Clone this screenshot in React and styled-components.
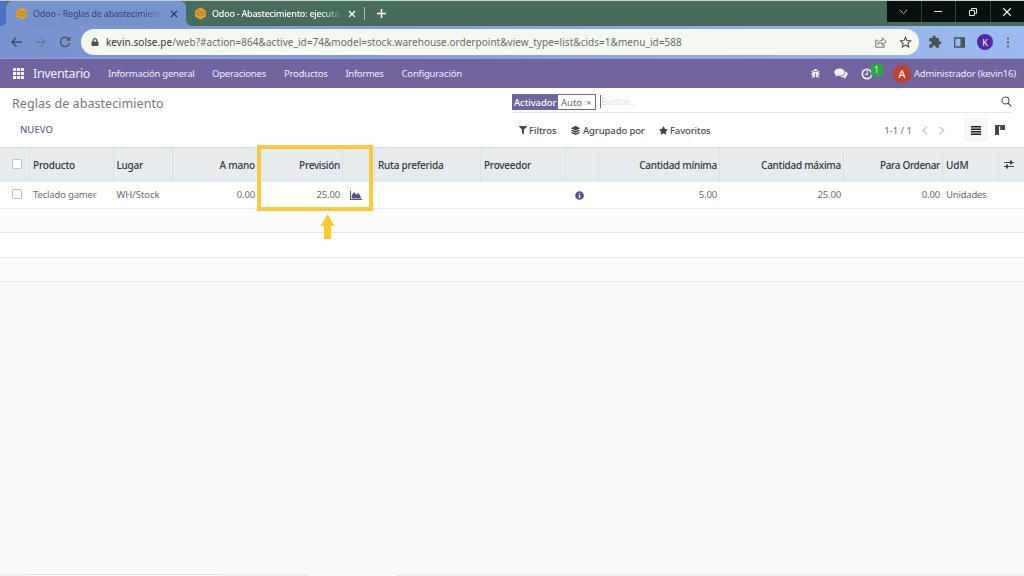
import React, { useState } from 'react';
import styled, { createGlobalStyle, css } from 'styled-components'
import { FaBug, FaFilter, FaLayerGroup, FaStar, FaInfoCircle, FaLock } from 'react-icons/fa'
import { MdExtension } from 'react-icons/md'

const GlobalStyle = createGlobalStyle`
  *{ box-sizing: border-box; }
  body{
    margin: 0;
    height: 576px;
    overflow: hidden;
    background: #f9fafc;
    font-family: "Noto Sans", "Open Sans", sans-serif;
    font-size: 9.5px;
    color: #666b70;
  }
  svg{ display: block; flex: none; }
`

const purple = '#71639e'

/* ---------- browser ---------- */
const Page = styled.div`
  display: flex;
  flex-direction: column;
  width: 1024px;
  height: 576px;
  overflow: hidden;
`
const TabStrip = styled.div`
  display: flex;
  flex: none;
  height: 26px;
  background: #486c5c;
  border-top: 1px solid #bfd3ca;
`
const StripEdge = styled.div`
  width: 6px;
  height: 25px;
  background: #4673c3;
  border-radius: 0 0 5px 0;
`
const EdgeWrap = styled.div`
  width: 6px;
  background: #7793cd;
`
const Tab = styled.div`
  display: flex;
  align-items: center;
  width: ${p => p.$width}px;
  height: 25px;
  padding: 0 8px 0 ${p => p.$left}px;
  color: ${p => (p.$active ? '#35466b' : '#fff')};
  background: ${p => (p.$active ? '#7793cd' : '#486c5c')};
  border-radius: ${p => (p.$active ? '6px 6px 0 0' : '0 0 0 6px')};
`
const TabHold = styled.div`
  background: #7b98d2;
`
const TabTitle = styled.div`
  width: ${p => p.$width}px;
  margin: 0 9px 0 5px;
  white-space: nowrap;
  font-size: 9px;
  font-weight: ${p => (p.$active ? 400 : 500)};
  letter-spacing: ${p => p.$track}px;
  mask-image: linear-gradient(90deg, #000 86%, rgba(0,0,0,.15));
`
const NewTab = styled.div`
  display: flex;
  align-items: center;
  height: 13px;
  margin-top: 6px;
  padding-left: 12px;
  border-left: 1px solid #a9bdb3;
`
const WindowButtons = styled.div`
  display: flex;
  gap: 1px;
  height: 21px;
  margin-left: auto;
  background: #34423f;
`
const WindowButton = styled.div`
  display: flex;
  align-items: center;
  justify-content: center;
  width: 33.5px;
  background: #08100f;
`
const Toolbar = styled.div`
  display: flex;
  flex: none;
  align-items: center;
  height: 33px;
  padding-left: 11px;
  background: linear-gradient(90deg, #7793cd, #84a3db 45%, #9cbbee);
  border-bottom: 1px solid #8f9fcf;
`
const NavIcons = styled.div`
  display: flex;
  align-items: center;
  gap: 13px;
  width: 70px;
`
const UrlBar = styled.div`
  display: flex;
  align-items: center;
  width: 838px;
  height: 26px;
  padding: 0 7px 0 10px;
  border-radius: 13px;
  background: #f5f8f1;
  color: #666b6a;
`
const Url = styled.div`
  flex: 1;
  margin-left: 7px;
  font-size: 10px;
  letter-spacing: ${p => p.$track}px;
  white-space: nowrap;
  b{ font-weight: 400; color: #30363a; }
`
const ToolIcons = styled.div`
  display: flex;
  align-items: center;
  gap: 12px;
  margin-left: 9px;
`
const Avatar = styled.div`
  display: flex;
  align-items: center;
  justify-content: center;
  width: ${p => p.$size}px;
  height: ${p => p.$size}px;
  border-radius: 50%;
  background: ${p => p.$color};
  color: #fff;
  font-size: ${p => p.$font}px;
`

/* ---------- navbar ---------- */
const Navbar = styled.div`
  display: flex;
  flex: none;
  align-items: center;
  height: 29px;
  padding: 0 6px 0 13px;
  background: ${purple};
  color: #f2eef8;
`
const Brand = styled.div`
  width: 66px;
  margin-left: 9px;
  font-size: 12.5px;
  letter-spacing: ${p => p.$track}px;
  white-space: nowrap;
`
const MenuItem = styled.div`
  width: ${p => p.$width}px;
  margin-left: 9px;
  margin-right: 9px;
  font-size: 9.5px;
  letter-spacing: ${p => p.$track}px;
  white-space: nowrap;
`
const Systray = styled.div`
  display: flex;
  align-items: center;
  margin-left: auto;
`
const Activity = styled.div`
  position: relative;
  margin: 0 20px 0 13px;
`
const Badge = styled.span`
  position: absolute;
  left: 9.5px;
  top: -4px;
  width: 12px;
  height: 12px;
  border-radius: 2px;
  background: #28a745;
  font-size: 8.5px;
  line-height: 11px;
  text-align: center;
`
const UserName = styled.div`
  width: 104px;
  margin-left: 3px;
  font-size: 9.5px;
  letter-spacing: ${p => p.$track}px;
  white-space: nowrap;
`

/* ---------- control panel ---------- */
const ControlPanel = styled.div`
  display: grid;
  flex: none;
  grid-template-columns: 500px 1fr;
  height: 59px;
  padding: 0 12px;
  background: #fff;
`
const Title = styled.div`
  height: 30px;
  padding-top: 1px;
  font-size: 12.5px;
  line-height: 29px;
  letter-spacing: ${p => p.$track}px;
  color: #72777c;
`
const NewButton = styled.div`
  padding-left: 8px;
  font-size: 9.5px;
  font-weight: 500;
  line-height: 23px;
  letter-spacing: ${p => p.$track}px;
  color: #665c92;
`
const SearchBox = styled.div`
  display: flex;
  align-items: center;
  height: 25px;
  padding-top: 3px;
  border-bottom: 1px solid #e6e7e9;
`
const Facet = styled.div`
  display: flex;
  width: 84px;
  height: 16px;
  border: 1px solid ${purple};
  line-height: 15px;
  white-space: nowrap;
`
const FacetName = styled.span`
  width: 45px;
  padding-left: 1px;
  background: ${purple};
  color: #fff;
  font-weight: 500;
  letter-spacing: ${p => p.$track}px;
`
const FacetValue = styled.span`
  flex: 1;
  padding-left: 3px;
  letter-spacing: ${p => p.$track}px;
  small{ margin-left: 4px; font-size: 9px; }
`
const Placeholder = styled.div`
  flex: 1;
  height: 13px;
  margin-left: 4px;
  border-left: 1px solid #6d6d6d;
  line-height: 14px;
  letter-spacing: -.2px;
  color: #e1e2e4;
`
const Options = styled.div`
  display: flex;
  align-items: center;
  height: 34px;
  padding-left: 7px;
`
const Option = styled.div`
  display: flex;
  align-items: center;
  gap: ${p => p.$gap || 2}px;
  width: ${p => p.$width}px;
  color: #43484e;
  font-weight: 500;
  letter-spacing: ${p => p.$track}px;
  white-space: nowrap;
`
const Pager = styled.div`
  display: flex;
  align-items: center;
  gap: 9px;
  margin-left: auto;
  margin-right: 17px;
`
const ViewButton = styled.div`
  display: flex;
  align-items: center;
  justify-content: center;
  width: 24px;
  height: 24px;
  background: ${p => (p.$active ? '#f7f8f9' : '#fff')};
`

/* ---------- list ---------- */
const ListWrap = styled.div`
  position: relative;
  flex: none;
`
const columns = css`
  display: grid;
  grid-template-columns: 30px 83.5px 59.5px 85px 85px 32px 106px 85px 33px 121px 124px 99px 56px 25px;
`
const HeadRow = styled.div`
  ${columns}
  height: 35px;
  padding-bottom: 1px;
  background: #e8ebed;
  border-top: 1px solid #dcdfe1;
  color: #32383f;
  font-size: 10px;
  font-weight: 500;
`
const Row = styled.div`
  ${columns}
  height: 27px;
  background: #fff;
  border-bottom: 1px solid #e9eaec;
`
const EmptyRow = styled.div`
  height: ${p => p.$height}px;
  background: ${p => (p.$odd ? '#fcfcfd' : '#fff')};
  border-bottom: 1px solid #e6e8ea;
`
const Cell = styled.div`
  display: flex;
  align-items: center;
  justify-content: ${p => p.$align || 'flex-start'};
  padding: 0 3px 1px;
  letter-spacing: ${p => p.$track || 0}px;
  white-space: nowrap;
  ${p => p.$head && css`
    padding: 0 2px 0 3px;
    border-right: 1px solid #dce1e3;
    &:last-child{ border-right: 0; }
  `}
`
const CheckBox = styled.div`
  width: 10px;
  height: 10px;
  margin: ${p => p.$top || 0}px 0 0 9px;
  border: 1px solid #bfc3c7;
  border-radius: 2px;
  background: #fff;
`
const IconCell = styled(Cell)`
  padding: 1px 0 0 ${p => p.$left}px;
`
const Highlight = styled.div`
  position: absolute;
  left: 257px;
  top: -2px;
  width: 116px;
  height: 66px;
  border: 4px solid #f8cb3e;
`
const Arrow = styled.svg`
  position: absolute;
  left: 320px;
  top: 67px;
`
/* top edge of the bar that peeks in under the page */
const BottomEdge = styled.div`
  display: grid;
  grid-template-columns: 27px 194px 88px 87px 1fr;
  height: 2px;
  margin-top: auto;
`
const EdgePart = styled.div`
  border-top: 1px solid ${p => p.$line || 'transparent'};
  background: ${p => p.$fill || 'transparent'};
`

const OdooIcon = () => (
  <svg width="13" height="13" viewBox="0 0 13 13">
    <path d="M6.5 .5 12 3.4v6.2l-5.5 2.9L1 9.6V3.4z" fill="#e5a12c" />
    <path d="M1.3 4.2 6.5 6.8l5.2-2.6M1.3 6.7l5.2 2.6 5.2-2.6M3.5 2.6l5.6 2.9" fill="none" stroke="#9d6f2c" strokeWidth=".8" />
  </svg>
)
const Cross = ({ size, color, width = 1.3 }) => (
  <svg width={size} height={size} viewBox="0 0 8 8" stroke={color} strokeWidth={width}>
    <path d="M1 1l6 6M7 1L1 7" />
  </svg>
)

const headers = [
  { text: 'Producto', track: -0.2 },
  { text: 'Lugar', track: -0.25 },
  { text: 'A mano', align: 'flex-end', track: -0.2 },
  { text: 'Previsión', align: 'flex-end', track: -0.3 },
  { text: '' },
  { text: 'Ruta preferida', track: -0.25 },
  { text: 'Proveedor', track: -0.25 },
  { text: '' },
  { text: 'Cantidad mínima', align: 'flex-end', track: -0.28 },
  { text: 'Cantidad máxima', align: 'flex-end', track: -0.28 },
  { text: 'Para Ordenar', align: 'flex-end', track: -0.35 },
  { text: 'UdM', track: -0.1 },
]

const Browser = () => (
  <>
    <TabStrip>
      <EdgeWrap><StripEdge /></EdgeWrap>
      <Tab $active $width={180} $left={9}>
        <OdooIcon />
        <TabTitle $active $width={128} $track={-0.2}>Odoo - Reglas de abastecimient</TabTitle>
        <Cross size={8} color="#2e3c5c" />
      </Tab>
      <TabHold>
        <Tab $width={178} $left={8}>
          <OdooIcon />
          <TabTitle $width={129} $track={-0.25}>Odoo - Abastecimiento: ejecuta</TabTitle>
          <Cross size={8} color="#fff" />
        </Tab>
      </TabHold>
      <NewTab>
        <svg width="9" height="9" viewBox="0 0 9 9" stroke="#fff" strokeWidth="1.5"><path d="M4.5 0v9M0 4.5h9" /></svg>
      </NewTab>
      <WindowButtons>
        <WindowButton><svg width="9" height="6" viewBox="0 0 9 6" fill="none" stroke="#aab0ae"><path d="M.7.7l3.8 4 3.8-4" /></svg></WindowButton>
        <WindowButton><svg width="8" height="2" viewBox="0 0 8 2" stroke="#dfe2e1"><path d="M0 .5h8" /></svg></WindowButton>
        <WindowButton><svg width="8" height="8" viewBox="0 0 8 8" fill="none" stroke="#e4e6e5"><path d="M.5 2.5h5v5h-5zM2.5 2.5v-2h5v5h-2" /></svg></WindowButton>
        <WindowButton><Cross size={10} color="#f2f3f3" width={0.9} /></WindowButton>
      </WindowButtons>
    </TabStrip>
    <Toolbar>
      <NavIcons>
        <svg width="11" height="10" viewBox="0 0 11 10" fill="none" stroke="#3f4c60" strokeWidth="1.4"><path d="M11 5H1M5.3.6L1 5l4.3 4.4" /></svg>
        <svg width="11" height="10" viewBox="0 0 11 10" fill="none" stroke="#66799f" strokeWidth="1.3"><path d="M0 5h10M5.7.6L10 5 5.7 9.4" /></svg>
        <svg width="12" height="12" viewBox="0 0 12 12" fill="none" stroke="#4a5665" strokeWidth="1.5"><path d="M10 3.2A4.7 4.7 0 1 0 10.7 7" /><path d="M11.3.6v4.2H7.1z" fill="#4a5665" stroke="none" /></svg>
      </NavIcons>
      <UrlBar>
        <FaLock size={8} color="#4b5050" />
        <Url $track={0.035}><b>kevin.solse.pe</b>/web?#action=864&amp;active_id=74&amp;model=stock.warehouse.orderpoint&amp;view_type=list&amp;cids=1&amp;menu_id=588</Url>
        <svg width="12" height="11" viewBox="0 0 12 11" fill="none" stroke="#5d6262" strokeWidth=".9"><path d="M3 3.2H.8v7h8.4V8M2.8 7.4C3 4.6 4.6 3.3 7.3 3.3V1l4 3.8-4 3.5V5.8C5.3 5.8 4 6.2 2.8 7.4z" /></svg>
        <svg width="13" height="12" viewBox="0 0 24 23" fill="none" stroke="#42484a" strokeWidth="2" style={{ marginLeft: 12 }}><path d="M12 2.3l2.9 6.5 7 .7-5.3 4.7 1.5 6.9-6.1-3.6-6.1 3.6 1.5-6.9L2.1 9.5l7-.7z" /></svg>
      </UrlBar>
      <ToolIcons>
        <MdExtension size={14} color="#46544f" />
        <svg width="11" height="11" viewBox="0 0 11 11"><path d="M.7 1h9.6v9H.7z" fill="none" stroke="#46544f" strokeWidth="1.3" /><path d="M6.5 1h4v9h-4z" fill="#46544f" /></svg>
        <Avatar $size={16} $font={9} $color="#5227a8">K</Avatar>
        <svg width="4" height="11" viewBox="0 0 4 11" fill="#4a5a6c" style={{ marginLeft: 1 }}><circle cx="2" cy="1.5" r="1.1" /><circle cx="2" cy="5.5" r="1.1" /><circle cx="2" cy="9.5" r="1.1" /></svg>
      </ToolIcons>
    </Toolbar>
  </>
)

const Nav = () => (
  <Navbar>
    <svg width="11" height="11" viewBox="0 0 11 11" fill="#f6f3fa">
      {[0, 4, 8].map(y => [0, 4, 8].map(x => <rect key={x + '-' + y} x={x} y={y} width="3.2" height="3" />))}
    </svg>
    <Brand $track={-0.35}>Inventario</Brand>
    <MenuItem $width={86} $track={-0.25}>Información general</MenuItem>
    <MenuItem $width={54} $track={-0.2}>Operaciones</MenuItem>
    <MenuItem $width={43.5} $track={-0.18}>Productos</MenuItem>
    <MenuItem $width={38} $track={-0.35}>Informes</MenuItem>
    <MenuItem $width={62} $track={-0.18}>Configuración</MenuItem>
    <Systray>
      <FaBug size={9} />
      <svg width="14" height="11" viewBox="0 0 14 11" fill="#f2eef8" style={{ marginLeft: 14 }}>
        <path d="M5.5.5C2.5.5.3 2.1.3 4.2c0 1.2.7 2.2 1.800 2.900-.1.600-.4 1.100-.9 1.600 1.100-.1 2-.5 2.700-1.100.5.100 1 .2 1.600.2 3 0 5.200-1.600 5.200-3.600S8.500.5 5.500.5z" />
        <path d="M11.5 3.3c.2 2.900-2.300 5.100-5.400 5.300.9.700 2.200 1 3.700.8.700.6 1.600 1 2.700 1.100-.5-.5-.8-1-.9-1.600 2.700-1.600 2.700-4.400-.1-5.600z" />
      </svg>
      <Activity>
        <svg width="12" height="12" viewBox="0 0 12 12" fill="none" stroke="#f2eef8"><circle cx="6" cy="6" r="4.7" strokeWidth="1.7" /><path d="M6.3 3v3.5H4" strokeWidth="1.1" /></svg>
        <Badge>1</Badge>
      </Activity>
      <Avatar $size={18} $font={11} $color="#c0412c">A</Avatar>
      <UserName $track={-0.2}>Administrador (kevin16)</UserName>
    </Systray>
  </Navbar>
)

const Panel = () => (
  <ControlPanel>
    <div>
      <Title $track={0.06}>Reglas de abastecimiento</Title>
      <NewButton $track={0}>NUEVO</NewButton>
    </div>
    <div>
      <SearchBox>
        <Facet>
          <FacetName $track={-0.1}>Activador</FacetName>
          <FacetValue $track={0}>Auto<small>×</small></FacetValue>
        </Facet>
        <Placeholder>Buscar...</Placeholder>
        <svg width="11" height="11" viewBox="0 0 11 11" fill="none" stroke="#4b5056" strokeWidth="1.1"><circle cx="4.5" cy="4.5" r="3.5" /><path d="M7 7l3.3 3.3" /></svg>
      </SearchBox>
      <Options>
        <Option $width={52} $track={-0.05}><FaFilter size={8} />Filtros</Option>
        <Option $width={88} $gap={3} $track={-0.13}><FaLayerGroup size={9} />Agrupado por</Option>
        <Option $width={60} $track={-0.15}><FaStar size={9} />Favoritos</Option>
        <Pager>
          <span>1-1 / 1</span>
          <svg width="26" height="9" viewBox="0 0 26 9" fill="none" stroke="#c5c8cb" strokeWidth="1.5"><path d="M6 .7L2 4.5l4 3.8M18.500 .7l4 3.800-4 3.800" /></svg>
        </Pager>
        <ViewButton $active><svg width="10" height="9" viewBox="0 0 10 9" stroke="#16181b" strokeWidth="1.5"><path d="M0 .8h10M0 3.2h10M0 5.7h10M0 8.2h10" /></svg></ViewButton>
        <ViewButton><svg width="10" height="10" viewBox="0 0 10 10" fill="#44494f"><path d="M0 0h10v1.2H0zM0 1.2h4V10H0zM5.2 1.2H10V5H5.2z" /></svg></ViewButton>
      </Options>
    </div>
  </ControlPanel>
)

const App = () => {
  const [rows] = useState([{ product: 'Teclado gamer', place: 'WH/Stock', onHand: '0.00', forecast: '25.00', min: '5.00', max: '25.00', toOrder: '0.00', uom: 'Unidades' }])
  return (
    <Page>
      <GlobalStyle />
      <Browser />
      <Nav />
      <Panel />
      <ListWrap>
        <HeadRow>
          <Cell $head><CheckBox $top={-2} /></Cell>
          {headers.map((h, i) => <Cell key={i} $head $align={h.align} $track={h.track}>{h.text}</Cell>)}
          <Cell $head>
            <svg width="11" height="9" viewBox="0 0 11 9" fill="none" stroke="#43484e" style={{ marginLeft: 2 }}><path d="M0 2.5h10M0 6.5h10" strokeWidth="1.2" /><path d="M7 .5v4M3 4.500v4" strokeWidth="2" /></svg>
          </Cell>
        </HeadRow>
        {rows.map(r => (
          <Row key={r.product}>
            <Cell><CheckBox $top={-1} /></Cell>
            <Cell $track={-0.17}>{r.product}</Cell>
            <Cell $track={-0.05}>{r.place}</Cell>
            <Cell $align="flex-end" $track={-0.15}>{r.onHand}</Cell>
            <Cell $align="flex-end" $track={-0.15}>{r.forecast}</Cell>
            <IconCell $left={7}>
              <svg width="12" height="9" viewBox="0 0 12 9" fill="#5c4f8c"><path d="M0 0h1v8h11v1H0z" /><path d="M1.7 7.5V4.500L4 1l2.300 2.400L8.800 2l2.500 5.500z" /></svg>
            </IconCell>
            <Cell />
            <Cell />
            <IconCell $left={9}><FaInfoCircle size={9} color="#5c4f8c" /></IconCell>
            <Cell $align="flex-end" $track={-0.15}>{r.min}</Cell>
            <Cell $align="flex-end" $track={-0.15}>{r.max}</Cell>
            <Cell $align="flex-end" $track={-0.15}>{r.toOrder}</Cell>
            <Cell $track={-0.2}>{r.uom}</Cell>
            <Cell />
          </Row>
        ))}
        <EmptyRow $odd $height={24} />
        <EmptyRow $height={25} />
        <EmptyRow $odd $height={24} />
        <Highlight />
        <Arrow width="15" height="25" viewBox="0 0 15 25"><path d="M7.5 0L14.5 12H11v13H4V12H.5z" fill="#fbc832" /></Arrow>
      </ListWrap>
      <BottomEdge>
        <EdgePart $fill="#eeeff0" />
        <EdgePart $line="#dcdddf" $fill="#fbfbfb" />
        <EdgePart $fill="#eeeff0" />
        <EdgePart />
        <EdgePart $fill="#eeeff0" />
      </BottomEdge>
    </Page>
  )
}

export default App;
